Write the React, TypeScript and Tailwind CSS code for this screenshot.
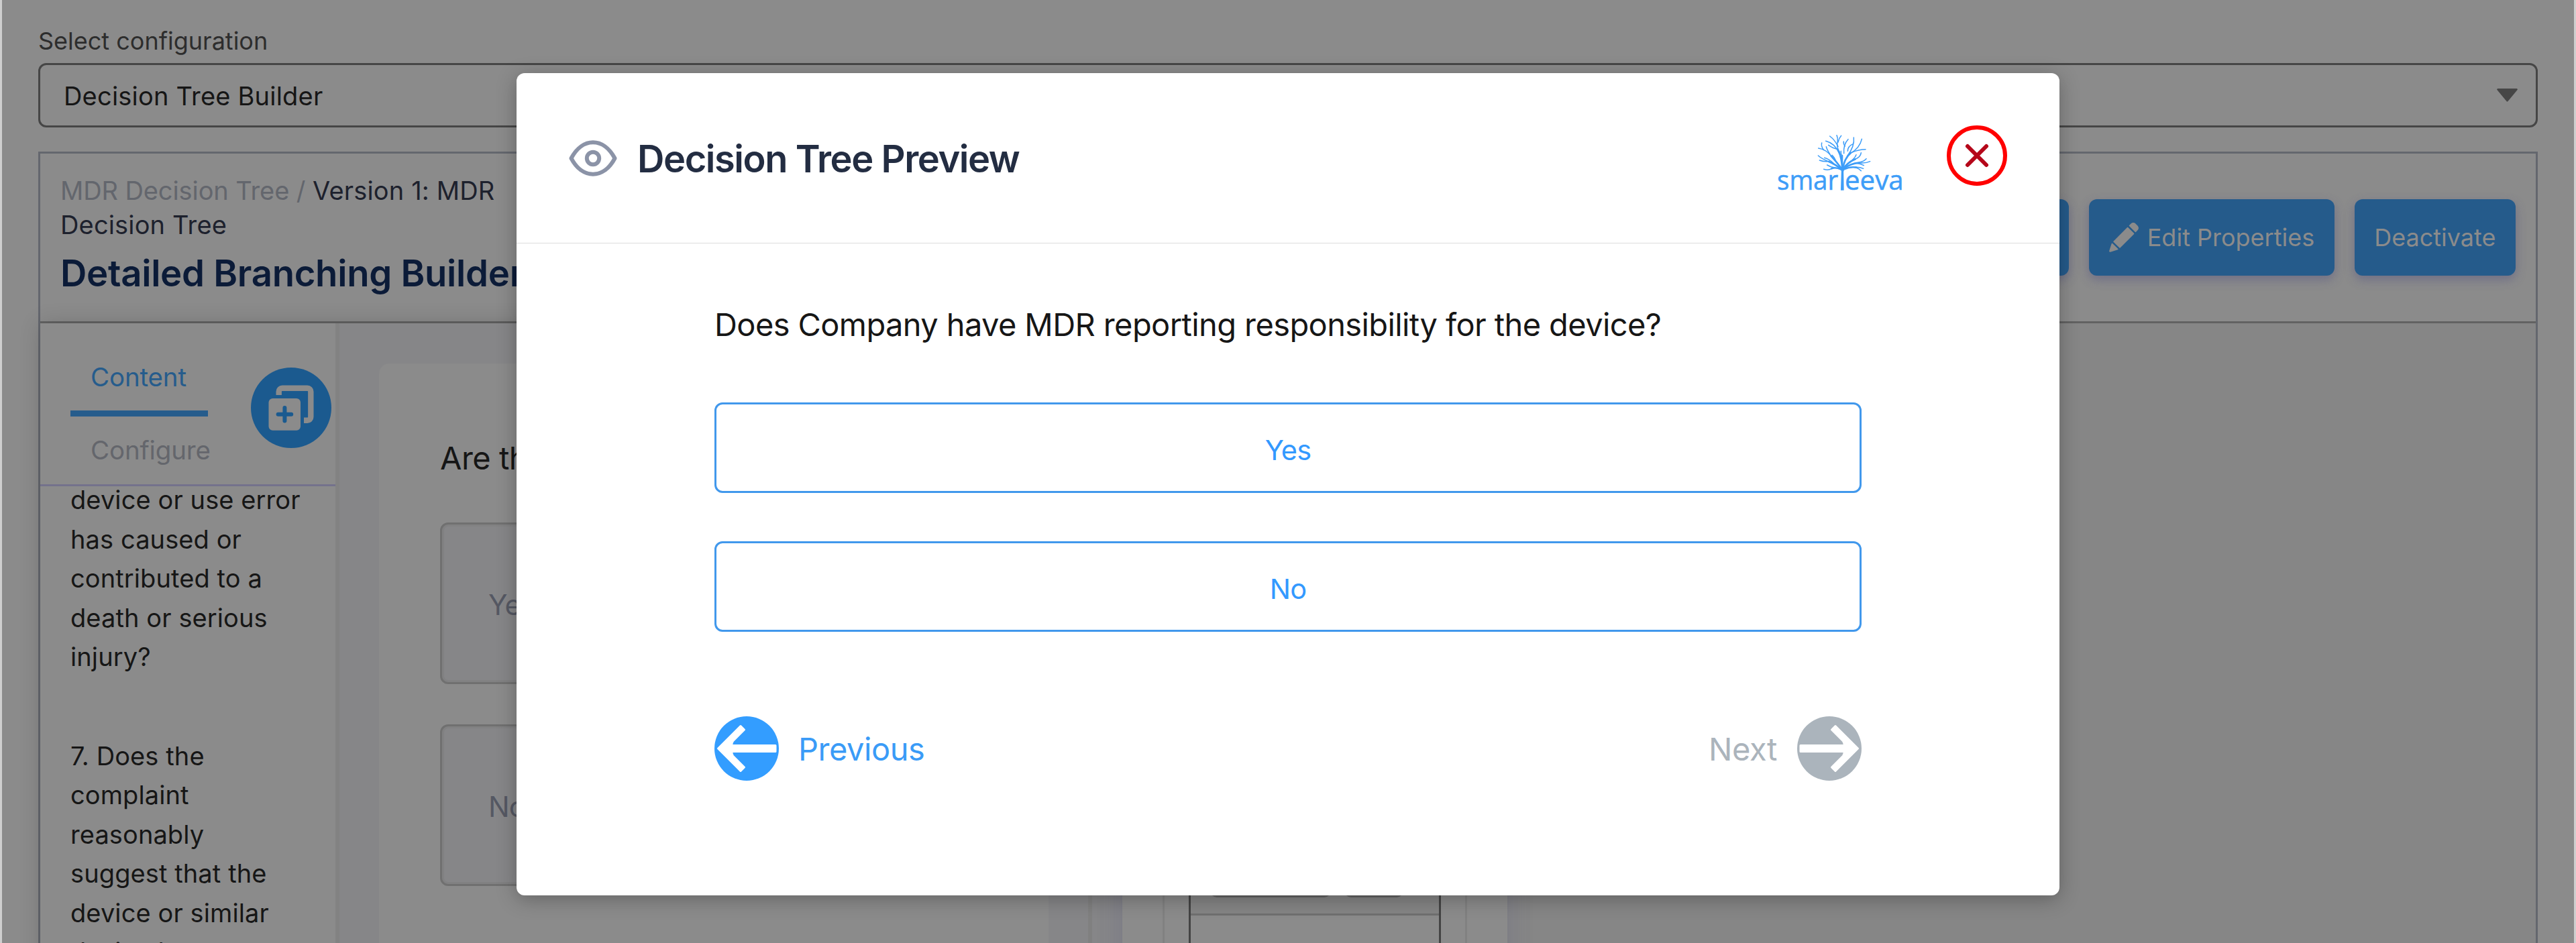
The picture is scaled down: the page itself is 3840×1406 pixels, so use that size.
import React from "react";

const Eye = () => (
  <svg className="h-[54px] w-[72px] shrink-0" viewBox="0 0 72 54" fill="none" stroke="#8b93a7" strokeWidth="6" strokeLinejoin="round">
    <path d="M3.5 27C12 11 24 3.2 36 3.2S60 11 68.5 27C60 43 48 50.8 36 50.8S12 43 3.5 27Z" />
    <circle cx="36" cy="27" r="9.2" />
  </svg>
);

const Pencil = () => (
  <svg className="h-[44px] w-[44px] shrink-0" viewBox="0 0 44 44" fill="#8b8b8b" stroke="#8b8b8b" strokeWidth="1.5" strokeLinejoin="round">
    <path d="M30.5 4.5 33.8 1.4Q36 0 38.2 1.4L42.4 5.6Q44 8 42.4 10.2L39.4 13.4Z" />
    <path d="M27.6 7.6 36.6 16.4 16 37 7 28.2Z" />
    <path d="M4.4 31.4 12.8 39.6 1.8 43Q.6 43.2 1 42Z" />
  </svg>
);

const AddIcon = () => (
  <svg className="h-[120px] w-[120px] shrink-0" viewBox="0 0 120 120">
    <circle cx="60" cy="60" r="60" fill="#1b5a8f" />
    <path d="M41.7 41V35.7a5 5 0 0 1 5-5H84.3a5 5 0 0 1 5 5V73.7a5 5 0 0 1-5 5H79" fill="none" stroke="#8b8b8b" strokeWidth="8.4" />
    <rect x="26.5" y="46" width="47.5" height="47.7" rx="6" fill="#8b8b8b" />
    <path d="M50.4 60V79.6M40.6 69.8H60.2" stroke="#1b5a8f" strokeWidth="6" strokeLinecap="round" />
  </svg>
);

const ArrowCircle = ({ color, flip }: { color: string; flip?: boolean }) => (
  <svg className={flip ? "h-24 w-24 shrink-0 -scale-x-100" : "h-24 w-24 shrink-0"} viewBox="0 0 96 96">
    <circle cx="48" cy="48" r="48" fill={color} />
    <path
      d="M5.5 48 39 14.5 44.5 20 27.500 37Q24 43.4 28 43.4H91V52.6H28Q24 52.6 27.500 59L44.5 76 39 81.5Z"
      fill="#fff" stroke="#fff" strokeWidth="3" strokeLinejoin="round"
    />
  </svg>
);

const CloseIcon = () => (
  <svg className="h-[90px] w-[90px] shrink-0" viewBox="0 0 90 90" fill="none" strokeWidth="6">
    <circle cx="45" cy="45" r="42" stroke="#ff0000" />
    <path d="M31 31 59 59M59 31 31 59" stroke="#b5071a" strokeLinecap="round" />
  </svg>
);

const Logo = () => (
  <svg className="h-[90px] w-[190px] shrink-0" viewBox="146 108 570 270">
    <g fill="none" stroke="#3d9df8" strokeLinecap="round">
      <path d="M431 365 433.500 280 428 264 438 258 449 264 443.500 282 445 365Z" fill="#3d9df8" stroke="none" />
      <g strokeWidth="8">
        <path d="M438 272Q436 225 422 190" />
        <path d="M436 270Q412 238 388 212" />
        <path d="M434 271Q405 248 378 237" />
        <path d="M440 272Q446 222 476 198" />
        <path d="M442 268Q466 238 496 226" />
        <path d="M442 270Q475 245 512 242" />
        <path d="M432 272Q408 260 390 268" />
        <path d="M444 272Q474 258 500 263" />
        <path d="M438 260Q436 235 437 210" />
      </g>
      <g strokeWidth="4.500">
        <path d="M422 192Q412 165 417 145Q418 130 413 119" />
        <path d="M419 170Q405 140 382 123" />
        <path d="M424 200Q405 155 364 145" />
        <path d="M419 150Q423 132 433 121" />
        <path d="M421 182Q396 178 376 163" />
        <path d="M390 214Q366 182 331 177" />
        <path d="M354 184Q342 168 346 153" />
        <path d="M384 206Q368 182 366 170" />
        <path d="M410 238Q404 218 392 208" />
        <path d="M380 238Q345 224 330 210" />
        <path d="M376 236Q355 238 336 231" />
        <path d="M398 244Q376 224 358 220" />
        <path d="M390 268Q376 278 355 271" />
        <path d="M404 264Q386 262 370 252" />
        <path d="M474 200Q516 176 525 136" />
        <path d="M480 196Q510 182 542 182" />
        <path d="M460 212Q494 168 489 129" />
        <path d="M445 200Q442 160 464 137" />
        <path d="M450 168Q442 158 444 147" />
        <path d="M462 190Q462 168 486 158" />
        <path d="M496 226Q520 216 522 197" />
        <path d="M470 238Q492 226 500 206" />
        <path d="M510 242Q542 246 562 236" />
        <path d="M514 240Q534 236 545 224" />
        <path d="M500 244Q520 246 534 254" />
        <path d="M498 263Q514 268 522 278" />
        <path d="M494 262Q514 260 532 268" />
        <path d="M437 214Q430 200 432 190" />
      </g>
    </g>
    <g fill="#3d9df8" stroke="#3d9df8" strokeWidth="1.500" fontFamily="'Open Sans','Noto Sans',sans-serif" fontSize="122">
      <text x="146" y="362" textLength="274" lengthAdjust="spacingAndGlyphs">smar</text>
      <text x="449" y="362" textLength="263" lengthAdjust="spacingAndGlyphs">eeva</text>
    </g>
  </svg>
);

const steps = [
  "device or use error has caused or contributed to a death or serious injury?",
  "7. Does the complaint reasonably suggest that the device or similar device has",
];

const BarButton = ({ children }: { children?: React.ReactNode }) => (
  <div className="flex h-[114px] items-center gap-[13px] rounded-[12px] bg-[#255b8b] px-[29.5px] text-[36px] text-[#8b8b8b] shadow-[0_6px_15px_rgba(70,70,130,0.4)]">
    {children}
  </div>
);

const Choice = ({ label }: { label: string }) => (
  <div className="flex h-[135px] items-center justify-center rounded-[12px] border-3 border-[#4198ec] pt-[8px] text-[41.5px] tracking-[-0.8px] text-[#3399ff]">
    {label}
  </div>
);

const Option = ({ label }: { label: string }) => (
  <div className="flex h-[241px] items-center rounded-[12px] border-3 border-[#707070] bg-[#868688] pl-[69px] pt-[3px] text-[42px] tracking-[-0.8px] text-[#555863] shadow-[inset_0_0_0_3px_#818182]">
    {label}
  </div>
);

export default function App() {
  return (
    <div className="relative h-[1406px] w-[3840px] overflow-hidden border-x-3 border-[#cfcfcf] bg-[#8b8b8b] px-[54px] pt-[34px] font-['Inter',sans-serif] text-[#161616]">
      <div className="h-[54px] text-[36px] leading-[54px] text-[#2d2d2d]">Select configuration</div>
      <div className="mt-[6px] flex h-24 items-center justify-between rounded-[12px] border-3 border-[#464646] pr-[27px] pl-[35px] text-[38px] tracking-[0.2px]">
        <span className="pt-[2px]">Decision Tree Builder</span>
        <svg className="h-[20px] w-[31px]" viewBox="0 0 31 20">
          <path d="M1 0H30L31 1.500 16.500 19Q15.500 20 14.500 19L0 1.500Z" fill="#464646" />
        </svg>
      </div>

      <div className="mt-[36px] h-[1300px] border-3 border-[#64676e]">
        <div className="flex h-[250px] items-center justify-between pr-[30px] pl-[30px]">
          <div className="h-[190px] w-[760px]">
            <div className="w-[700px] text-[38px] leading-[51px] tracking-[0.15px] text-[#1d212d]">
              <span className="tracking-[-0.1px] text-[#63666d]">MDR Decision Tree / </span>Version 1: MDR Decision Tree
            </div>
            <div className="mt-[13px] text-[54.5px] leading-[66px] font-semibold tracking-[-0.3px] whitespace-nowrap text-[#0b1b38]">Detailed Branching Builder</div>
          </div>
          <div className="flex gap-[30px]">
            <BarButton>Preview</BarButton>
            <BarButton><Pencil />Edit Properties</BarButton>
            <BarButton>Deactivate</BarButton>
          </div>
        </div>

        <div className="flex h-[1000px] border-t-3 border-[#626262] bg-[#868686]">
          <div className="flex shadow-[0_0_30px_rgba(0,0,0,0.16)]">
            <div className="w-[440px] bg-[#8b8b8b]">
              <div className="flex h-[243px] border-b-3 border-[#74728c] pl-[45px]">
                <div className="w-[269px] pt-[32px] text-[38.5px] tracking-[-0.15px]">
                  <div className="flex h-[107px] w-[205px] items-center border-b-9 border-[#265c8c] pl-[30px] text-[#265c8c]">Content</div>
                  <div className="flex h-[101px] items-center pt-[1px] pl-[30px] text-[#64666c]">Configure</div>
                </div>
                <div className="pt-[66px]"><AddIcon /></div>
              </div>
              <div className="h-[700px] overflow-hidden px-[45px] text-[38px] leading-[58.5px] tracking-[0.1px]">
                <div className="-mt-[9px] flex flex-col gap-[89px]">
                  {steps.map((s) => <p key={s} className="w-[350px]">{s}</p>)}
                </div>
              </div>
            </div>
            <div className="w-[6px] bg-[#828282]" />
            <div className="w-[1116px] bg-[#868688] px-[59px] pt-[60px]">
              <div className="h-[900px] rounded-t-[15px] bg-[#8b8b8b] px-[91px] pt-[105px]">
                <div className="h-[72px] text-[47px] leading-[72px] tracking-[-0.5px]">Are there any other devices?</div>
                <div className="mt-[60px] flex flex-col gap-[60px]">
                  <Option label="Yes" />
                  <Option label="No" />
                </div>
              </div>
            </div>
          </div>
          <div className="w-[6px] bg-[#808080]" />
          <div className="w-[45px] bg-[#868688]" />
          <div className="relative w-[574px] bg-[#8b8b8b] px-[60px] shadow-[0_0_36px_rgba(70,70,130,0.2)]">
            <div className="h-full border-x-3 border-[#818181] px-[36px]">
              <div className="h-full border-x-3 border-[#444444]">
                <div className="flex h-[883px] items-end gap-[20px] border-b-3 border-[#6f6f6f] bg-[#858585] pb-[24px] pl-[29px]">
                  <div className="h-[60px] w-[180px] rounded-[10px] bg-[#646464]" />
                  <div className="h-[60px] w-[88px] rounded-[10px] bg-[#646464]" />
                </div>
              </div>
            </div>
          </div>
        </div>
      </div>

      <div className="absolute top-[109px] left-[767px] h-[1226px] w-[2300px] rounded-[12px] bg-white shadow-[0_6px_30px_rgba(0,0,0,0.28)]">
        <div className="flex h-[254px] items-center border-b border-[#dddddd] pr-[78px] pl-[78px]">
          <Eye />
          <div className="ml-[30px] flex-1 pt-[2px] text-[56px] font-semibold tracking-[-1.45px] text-[#232d42]">Decision Tree Preview</div>
          <div className="mt-[14px] mr-[63px]"><Logo /></div>
          <div className="-mt-[7px]"><CloseIcon /></div>
        </div>
        <div className="px-[295px] pt-[85px]">
          <div className="h-[72px] text-[47px] leading-[72px] tracking-[-0.6px] whitespace-nowrap">
            Does Company have MDR reporting responsibility for the device?
          </div>
          <div className="mt-[80px] flex flex-col gap-[72px]">
            <Choice label="Yes" />
            <Choice label="No" />
          </div>
          <div className="mt-[126px] flex items-center justify-between text-[47px] tracking-[-0.45px]">
            <div className="flex items-center gap-[29px] text-[#3a9bf7]">
              <ArrowCircle color="#339dff" />
              <span className="pt-[2px]">Previous</span>
            </div>
            <div className="flex items-center gap-[30px] text-[#abb4bc]">
              <span className="pt-[2px]">Next</span>
              <ArrowCircle color="#abb4bc" flip />
            </div>
          </div>
        </div>
      </div>
    </div>
  );
}
